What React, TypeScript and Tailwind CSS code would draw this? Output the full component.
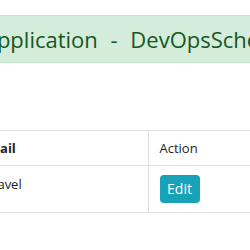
export default function App() {
  return (
    <div className="w-[250px] h-[250px] overflow-hidden bg-white" style={{ fontFamily: '"Open Sans", "Noto Sans", sans-serif' }}>
      <div className="pt-[15px]">
        <div className="h-[48px] bg-[#d4edda] border-y border-[#c3e6cb] flex items-center overflow-hidden">
          <h2 className="shrink-0 whitespace-nowrap ml-[-17px] text-[22px] leading-none [word-spacing:7px] text-[#155724]">Application - DevOpsSchool</h2>
        </div>
      </div>

      <table className="mt-[67px] ml-[-32px] w-[420px] table-fixed border-collapse text-[13px] leading-[19px] text-[#212529]">
        <colgroup>
          <col className="w-[180px]" />
          <col />
        </colgroup>
        <thead>
          <tr className="border-y border-[#dee2e6]">
            <th className="pl-[12px] pr-[11px] pt-[8px] pb-[7px] text-left font-bold">Email</th>
            <th className="border-l border-[#dee2e6] px-[11px] pt-[8px] pb-[7px] text-left font-normal">Action</th>
          </tr>
        </thead>
        <tbody>
          <tr className="border-b border-[#dee2e6]">
            <td className="pl-[12px] pr-[11px] py-[9px] align-top">Dhavel</td>
            <td className="border-l border-[#dee2e6] px-[11px] py-[9px] align-top">
              <button className="w-[40px] h-[28px] rounded-[4px] bg-[#17a2b8] text-white text-[14px] leading-none">Edit</button>
            </td>
          </tr>
        </tbody>
      </table>
    </div>
  );
}
